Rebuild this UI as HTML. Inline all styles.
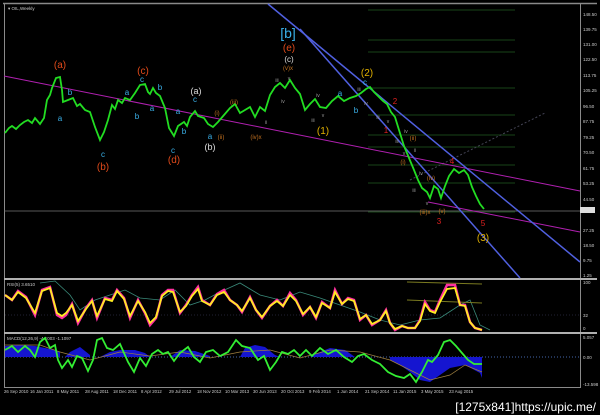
<!DOCTYPE html>
<html><head><meta charset="utf-8"><style>
html,body{margin:0;padding:0;background:#000;width:600px;height:415px;overflow:hidden}
svg{display:block}
text{font-family:"Liberation Sans",sans-serif}
</style></head><body>
<svg width="600" height="415" viewBox="0 0 600 415" xmlns="http://www.w3.org/2000/svg">
<rect width="600" height="415" fill="#000"/>
<g fill="none" stroke="#8a8a8a">
<line x1="3" y1="3.5" x2="597" y2="3.5" stroke-width="1.5"/>
<line x1="4.5" y1="3" x2="4.5" y2="388"/>
<line x1="580.5" y1="3" x2="580.5" y2="388"/>
<line x1="4" y1="279" x2="597" y2="279" stroke="#b0b0b0" stroke-width="2"/>
<line x1="4" y1="333" x2="597" y2="333" stroke="#b0b0b0" stroke-width="2"/>
<line x1="4" y1="387.5" x2="581" y2="387.5"/>
</g>
<text x="8" y="10" font-size="4.5" fill="#ccc">▾ OIL,Weekly</text>
<g stroke="#1f5a1f" stroke-width="0.8">
<line x1="368" y1="10" x2="515" y2="10"/><line x1="368" y1="40" x2="515" y2="40"/>
<line x1="368" y1="52" x2="515" y2="52"/><line x1="368" y1="88" x2="515" y2="88"/>
<line x1="368" y1="115" x2="515" y2="115"/><line x1="368" y1="135" x2="515" y2="135"/>
<line x1="368" y1="147" x2="515" y2="147"/><line x1="368" y1="165" x2="515" y2="165"/>
<line x1="368" y1="183" x2="515" y2="183"/><line x1="368" y1="212" x2="515" y2="212"/>
</g>
<line x1="4" y1="211" x2="580" y2="211" stroke="#777" stroke-width="0.8"/>
<line x1="410" y1="180" x2="545" y2="113" stroke="#445" stroke-dasharray="2,2"/>
<line x1="4" y1="76" x2="580" y2="191" stroke="#b020b0" stroke-width="1"/>
<line x1="428" y1="202" x2="580" y2="232" stroke="#b020b0" stroke-width="1"/>
<line x1="268" y1="4" x2="580" y2="262" stroke="#5060e0" stroke-width="1.5"/>
<line x1="300" y1="29" x2="520" y2="278" stroke="#5060e0" stroke-width="1.5"/>
<polyline fill="none" stroke="#22dd22" stroke-width="1.8" points="5,133 9,128 12,126 16,129 20,125 24,122 28,120 32,123 35,118 40,124 44,118 47,100 50,95 52,88 56,78 60,77 62,90 63,102 68,100 73,98 77,106 80,104 85,110 90,112 95,127 100,140 104,132 108,120 112,105 115,109 118,100 122,103 125,98 130,100 135,93 140,85 145,84 148,92 150,94 153,88 156,93 160,96 165,108 169,128 174,136 178,126 184,122 187,126 190,117 195,111 198,116 204,118 208,124 213,127 218,122 224,115 230,108 235,104 240,113 245,110 250,107 255,117 260,107 265,111 270,95 275,87 280,83 285,88 290,80 295,88 300,94 305,110 310,104 315,99 320,107 326,108 332,101 338,96 344,101 350,98 356,96 361,93 366,89 370,87 374,92 378,96 383,101 387,104 391,112 395,117 399,130 404,146 409,158 414,170 418,180 422,188 427,192 430,198 434,186 438,189 441,198 445,186 449,176 454,169 459,173 464,170 468,175 472,187 476,196 480,204 484,209"/>
<g font-size="10" text-anchor="middle">
<text x="60" y="68" fill="#e04a1a">(a)</text><text x="103" y="170" fill="#e04a1a">(b)</text>
<text x="143" y="74" fill="#e04a1a">(c)</text><text x="174" y="163" fill="#e04a1a">(d)</text>
<text x="289" y="51" fill="#e04a1a">(e)</text>
<text x="196" y="94" fill="#ddd" font-size="9">(a)</text><text x="210" y="150" fill="#ddd" font-size="9">(b)</text>
<text x="289" y="62" fill="#ddd" font-size="8">(c)</text>
<text x="288" y="38" fill="#3ab0e8" font-size="14">[b]</text>
<text x="323" y="134" fill="#e0b000">(1)</text><text x="367" y="76" fill="#e0b000">(2)</text>
<text x="483" y="241" fill="#e0b000">(3)</text>
</g>
<g font-size="8" fill="#3ab0e8" text-anchor="middle">
<text x="60" y="121">a</text><text x="70" y="95">b</text><text x="103" y="157">c</text>
<text x="127" y="95">a</text><text x="137" y="119">b</text><text x="142" y="82">c</text>
<text x="152" y="111">a</text><text x="160" y="90">b</text><text x="173" y="153">c</text>
<text x="178" y="114">a</text><text x="184" y="134">b</text><text x="195" y="102">c</text>
<text x="210" y="139">a</text><text x="340" y="96">a</text><text x="356" y="113">b</text><text x="365" y="85">c</text>
</g>
<g font-size="6" fill="#c07020" text-anchor="middle">
<text x="217" y="115">(i)</text><text x="221" y="139">(ii)</text><text x="234" y="104">(iii)</text>
<text x="256" y="139">(iv)x</text><text x="288" y="70">(v)x</text>
<text x="413" y="140">(ii)</text><text x="403" y="164">(i)</text><text x="431" y="180">(iv)</text>
<text x="425" y="214">(iii)x</text><text x="442" y="213">(v)</text>
</g>
<g font-size="8" fill="#e02020" text-anchor="middle">
<text x="395" y="104">2</text><text x="386" y="133">1</text><text x="452" y="164">4</text>
<text x="439" y="224">3</text><text x="483" y="226">5</text>
</g>
<g font-size="5" fill="#999" text-anchor="middle">
<text x="277" y="82">iii</text><text x="283" y="103">iv</text><text x="289" y="80">v</text><text x="266" y="124">ii</text>
<text x="318" y="97">iv</text><text x="313" y="122">iii</text><text x="323" y="117">v</text>
<text x="359" y="91">iii</text><text x="366" y="105">iv</text><text x="378" y="119">iii</text><text x="388" y="123">v</text>
<text x="406" y="133">iv</text><text x="397" y="143">iii</text><text x="415" y="152">ii</text><text x="404" y="155">v</text>
<text x="421" y="175">iv</text><text x="414" y="192">iii</text><text x="427" y="205">v</text>
</g>
<g font-size="4.5" fill="#ccc">
<text x="583" y="16">148.50</text><text x="583" y="31">139.75</text><text x="583" y="46">131.00</text>
<text x="583" y="61">122.50</text><text x="583" y="77">113.75</text><text x="583" y="92">105.25</text>
<text x="583" y="108">96.50</text><text x="583" y="123">87.75</text><text x="583" y="139">79.25</text>
<text x="583" y="154">70.50</text><text x="583" y="170">61.75</text><text x="583" y="185">53.25</text>
<text x="583" y="201">44.50</text><text x="583" y="232">27.25</text><text x="583" y="247">18.50</text>
<text x="583" y="262">9.75</text><text x="583" y="277">1.25</text>
<text x="583" y="284">100</text><text x="583" y="317">32</text><text x="583" y="330">0</text>
<text x="583" y="339">5.057</text><text x="583" y="359">0.00</text><text x="583" y="386">-13.598</text>
</g>
<rect x="580" y="207" width="15" height="6" fill="#ddd"/>
<text x="7" y="286" font-size="4.5" fill="#ccc">RSI(5) 3.6510</text>
<line x1="5" y1="315" x2="580" y2="315" stroke="#223" stroke-dasharray="1,2"/>
<polyline fill="none" stroke="#3a8a7a" stroke-width="0.8" points="40,283 55,281 70,295 80,310 95,300 110,295 125,290 140,298 160,300 175,290 190,305 205,300 220,292 240,283 260,295 280,300 300,292 320,298 340,305 360,312 380,320 400,325 420,320 440,318 460,305 470,300 480,325 490,330"/>
<line x1="407" y1="282" x2="482" y2="284" stroke="#7a7a20"/>
<line x1="407" y1="300" x2="482" y2="303" stroke="#7a7a20"/>
<polyline fill="none" stroke="#ff30a0" stroke-width="2.5" points="5,295 12,300 18,291 26,297 35,315 42,290 50,287 57,315 62,318 66,315 72,304 78,323 86,308 92,300 97,318 105,298 112,300 117,290 124,298 130,318 138,300 145,313 150,325 156,318 162,295 168,290 173,290 180,313 186,305 192,295 198,287 202,300 210,305 217,294 224,290 230,300 237,305 242,312 250,297 256,310 262,318 270,306 277,300 283,306 290,293 296,300 303,315 310,307 316,318 322,302 330,308 335,290 342,304 348,298 354,300 360,320 366,315 372,325 380,320 386,310 390,323 395,330 402,326 408,328 415,328 420,320 425,302 430,310 435,312 440,300 447,285 455,285 460,305 465,305 470,322 475,328 482,330"/>
<polyline fill="none" stroke="#ffee20" stroke-width="1.8" points="5,295 12,300 18,292 26,298 35,313 42,291 50,288 57,313 62,316 66,313 72,305 78,321 86,309 92,301 97,316 105,299 112,301 117,291 124,299 130,316 138,301 145,312 150,323 156,317 162,296 168,291 173,292 180,312 186,306 192,296 198,289 202,301 210,305 217,295 224,292 230,300 237,305 242,311 250,298 256,310 262,317 270,306 277,301 283,306 290,295 296,301 303,314 310,307 316,317 322,303 330,308 335,292 342,304 348,299 354,301 360,319 366,315 372,324 380,320 386,311 390,323 395,329 402,326 408,328 415,328 420,321 425,304 430,311 435,313 440,302 447,289 455,288 460,305 465,306 470,322 475,328 482,330"/>
<text x="7" y="340" font-size="4.5" fill="#ccc">MACD(12,26,9) -4.1003 -1.1097</text>
<line x1="5" y1="357" x2="580" y2="357" stroke="#4466aa" stroke-dasharray="1,2"/>
<path d="M5,357 L5,346 L20,345 L35,346 L45,348 L55,350 L60,352 L60,357 Z M65,357 L70,352 L80,347 L90,355 L90,357 Z M100,357 L110,352 L120,350 L135,350 L145,353 L150,357 Z M170,357 L180,350 L195,351 L210,356 L210,357 Z M240,357 L245,348 L255,345 L265,347 L275,355 L280,357 Z M310,357 L320,352 L330,348 L345,350 L355,357 Z M390,357 L390,360 L400,365 L410,372 L420,380 L430,382 L440,375 L450,368 L465,365 L480,373 L482,378 L482,357 Z" fill="#1515d0"/>
<polyline fill="none" stroke="#a08040" stroke-width="0.7" points="5,345 40,345 60,352 90,360 120,352 150,356 180,352 210,358 240,352 270,350 300,358 330,350 360,352 390,360 410,370 430,380 450,375 465,365 482,372"/>
<polyline fill="none" stroke="#33ee33" stroke-width="1.8" points="5,350 12,346 18,352 25,346 30,350 35,357 40,342 45,338 50,348 55,345 58,360 62,368 68,360 72,367 77,356 82,358 88,371 93,360 97,340 102,338 107,348 113,350 120,344 128,362 134,372 140,358 146,366 152,354 158,350 163,354 168,352 174,361 180,353 188,347 194,357 200,362 206,352 213,350 220,356 228,352 236,340 242,346 250,348 258,360 264,356 270,370 276,362 282,352 288,354 294,350 300,356 306,350 312,356 320,348 328,354 336,350 344,357 352,362 358,356 364,354 372,360 380,364 388,372 396,376 404,378 410,374 416,382 422,372 428,360 432,362 438,355 444,342 450,340 456,346 462,353 468,360 474,364 482,364"/>
<g font-size="4.3" fill="#ccc">
<text x="4" y="393">26 Sep 2010</text><text x="30" y="393">16 Jan 2011</text><text x="57" y="393">8 May 2011</text>
<text x="85" y="393">28 Aug 2011</text><text x="113" y="393">18 Dec 2011</text><text x="141" y="393">8 Apr 2012</text>
<text x="169" y="393">29 Jul 2012</text><text x="197" y="393">18 Nov 2012</text><text x="225" y="393">10 Mar 2013</text>
<text x="253" y="393">30 Jun 2013</text><text x="281" y="393">20 Oct 2013</text><text x="309" y="393">9 Feb 2014</text>
<text x="337" y="393">1 Jun 2014</text><text x="365" y="393">21 Sep 2014</text><text x="393" y="393">11 Jan 2015</text>
<text x="421" y="393">3 May 2015</text><text x="449" y="393">23 Aug 2015</text>
</g>
<text x="596" y="411" font-size="12" fill="#fff" text-anchor="end" font-family="Liberation Mono,monospace">[1275x841]https://upic.me/</text>
</svg>
</body></html>
